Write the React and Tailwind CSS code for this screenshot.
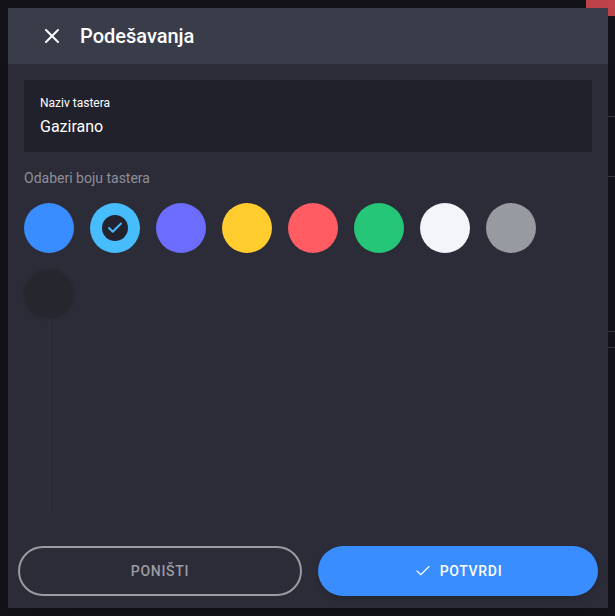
import { X, Check } from 'lucide-react';

const colors = [
  { id: 'blue', bg: 'bg-[#3a8dfe]' },
  { id: 'sky', bg: 'bg-[#47bdfd]' },
  { id: 'violet', bg: 'bg-[#6c6cfd]' },
  { id: 'yellow', bg: 'bg-[#ffcd2e]' },
  { id: 'red', bg: 'bg-[#ff5c63]' },
  { id: 'green', bg: 'bg-[#25c678]' },
  { id: 'white', bg: 'bg-[#f4f5fa]' },
  { id: 'gray', bg: 'bg-[#989aa1]' },
];

function Swatch({ bg, selected }) {
  return (
    <button className={`w-[50px] h-[50px] rounded-full ${bg} flex items-center justify-center`}>
      {selected && (
        <span className="w-[26px] h-[26px] rounded-full bg-[#23232f] flex items-center justify-center">
          <Check size={18} strokeWidth={2.5} className="text-[#47bdfd]" />
        </span>
      )}
    </button>
  );
}

export default function App() {
  return (
    <div className="relative w-[615px] h-[616px] bg-[#14131a] overflow-hidden font-['Roboto',sans-serif]">
      {/* background app behind the modal */}
      <div className="absolute top-0 right-0 w-[29px] h-[16px] bg-[#c0444a]" />
      <div className="absolute top-[116px] right-0 w-[7px] h-px bg-[#3a3a44]" />
      <div className="absolute top-[176px] right-0 w-[7px] h-px bg-[#3a3a44]" />
      <div className="absolute top-[331px] right-0 w-[7px] h-px bg-[#3a3a44]" />
      <div className="absolute top-[347px] right-0 w-[7px] h-px bg-[#3a3a44]" />

      <div className="relative p-2">
        <div className="w-[600px] h-[600px] bg-[#2c2c38] flex flex-col shadow-2xl">
          <div className="h-14 bg-[#393d4a] flex items-center gap-4 px-8 text-white">
            <X size={24} strokeWidth={2} />
            <h1 className="text-xl font-medium">Podešavanja</h1>
          </div>

          <div className="flex-1 px-4 pt-4">
            <div className="bg-[#21212b] h-[72px] px-4 pt-[2px] flex flex-col justify-center">
              <label className="text-xs text-white leading-4">Naziv tastera</label>
              <div className="text-base text-white leading-6 mt-1">Gazirano</div>
            </div>

            <p className="text-sm text-[#8e8f99] mt-4">Odaberi boju tastera</p>

            <div className="flex flex-wrap gap-4 mt-[15px] w-[560px]">
              {colors.map((c) => (
                <Swatch key={c.id} bg={c.bg} selected={c.id === 'sky'} />
              ))}
              <div className="flex flex-col items-center">
                <span className="w-[50px] h-[50px] rounded-full bg-[#26262e] blur-[1px]" />
                <span className="w-px h-[194px] bg-[#33333f]" />
              </div>
            </div>
          </div>

          <div className="flex gap-4 px-[10px] pb-3">
            <button className="flex-1 h-[50px] rounded-full border-2 border-[#9b9ba2] text-[#9b9ba2] text-sm font-medium tracking-wider">
              PONIŠTI
            </button>
            <button className="flex-1 h-[50px] rounded-full bg-[#3a8dfe] text-white text-sm font-medium tracking-wider flex items-center justify-center gap-2 shadow-md">
              <Check size={18} strokeWidth={1.5} />
              POTVRDI
            </button>
          </div>
        </div>
      </div>
    </div>
  );
}
